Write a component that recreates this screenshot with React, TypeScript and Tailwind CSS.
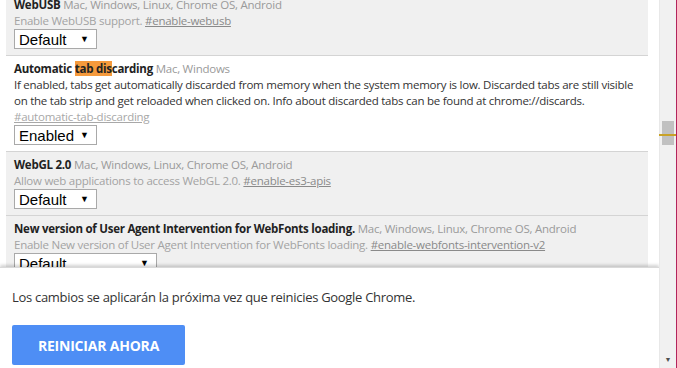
import React from 'react';

/* chrome://flags 風の画面 */

type Flag = {
  title: React.ReactNode;
  platforms: string;
  desc: React.ReactNode;
  value: string;
  selectW: string;
  active?: boolean;
};

const flags: Flag[] = [
  {
    title: 'WebUSB',
    platforms: 'Mac, Windows, Linux, Chrome OS, Android',
    desc: (
      <>
        Enable WebUSB support. <span className="underline text-[#8a8a8a]">#enable-webusb</span>
      </>
    ),
    value: 'Default',
    selectW: 'w-[83px]',
  },
  {
    title: (
      <>
        Automatic <span className="bg-[#f59a3c]">tab dis</span>carding
      </>
    ),
    platforms: 'Mac, Windows',
    desc: (
      <>
        <span className="text-[#333]">
          If enabled, tabs get automatically discarded from memory when the system memory is low. Discarded tabs are still visible
          <br />
          on the tab strip and get reloaded when clicked on. Info about discarded tabs can be found at chrome://discards.
        </span>
        <br />
        <span className="underline text-[#a8a8a8]">#automatic-tab-discarding</span>
      </>
    ),
    value: 'Enabled',
    selectW: 'w-[83px]',
    active: true,
  },
  {
    title: 'WebGL 2.0',
    platforms: 'Mac, Windows, Linux, Chrome OS, Android',
    desc: (
      <>
        Allow web applications to access WebGL 2.0. <span className="underline text-[#8a8a8a]">#enable-es3-apis</span>
      </>
    ),
    value: 'Default',
    selectW: 'w-[83px]',
  },
  {
    title: 'New version of User Agent Intervention for WebFonts loading.',
    platforms: 'Mac, Windows, Linux, Chrome OS, Android',
    desc: (
      <>
        Enable New version of User Agent Intervention for WebFonts loading.{' '}
        <span className="underline text-[#8a8a8a]">#enable-webfonts-intervention-v2</span>
      </>
    ),
    value: 'Default',
    selectW: 'w-[143px]',
  },
];

const FakeSelect = ({ value, w }: { value: string; w: string }) => (
  <div
    className={`${w} h-[20px] flex items-center justify-between pl-[4px] pr-[7px] bg-white border border-[#a9a9a9] text-[15px] leading-none text-black tracking-normal`}
    style={{ fontFamily: '"Liberation Sans", Arial, sans-serif' }}
  >
    <span>{value}</span>
    <span className="text-[9px]">▼</span>
  </div>
);

const FlagRow = ({ flag }: { flag: Flag }) => (
  <div
    className={`px-[8px] pt-[5px] pb-[6px] border-b border-[#d4d4d4] ${flag.active ? 'bg-white' : 'bg-[#f0f0f0]'}`}
  >
    <div className="text-[11.5px] leading-[16px] whitespace-nowrap">
      <span className="font-bold text-[#222]">{flag.title}</span>{' '}
      <span className="text-[#9a9a9a]">{flag.platforms}</span>
    </div>
    <div className="text-[11.5px] leading-[16px] text-[#a3a3a3] whitespace-nowrap">{flag.desc}</div>
    <FakeSelect value={flag.value} w={flag.selectW} />
  </div>
);

export default function App() {
  return (
    <div
      className="w-[677px] h-[368px] overflow-hidden flex bg-white"
      style={{ fontFamily: '"Open Sans", "Noto Sans", sans-serif' }}
    >
      {/* メイン領域 */}
      <div className="w-[659px] flex flex-col">
        <div className="h-[267px] overflow-hidden">
          <div className="mt-[-8px] ml-[6px] w-[642px] tracking-[-0.25px]">
            {flags.map((f, i) => (
              <FlagRow key={i} flag={f} />
            ))}
          </div>
        </div>
        <div className="flex-1 bg-white shadow-[0_-2px_3px_rgba(0,0,0,0.18)] border-t border-[#d9d9d9] px-[12px] pt-[20px]">
          <p className="text-[13px] leading-[18px] text-[#333] tracking-[-0.3px]">
            Los cambios se aplicarán la próxima vez que reinicies Google Chrome.
          </p>
          <button className="mt-[19px] w-[173px] h-[40px] rounded-[2px] bg-[#4e8ef5] text-white font-bold text-[14px] tracking-[-0.2px]">
            REINICIAR AHORA
          </button>
        </div>
      </div>

      {/* スクロールバー */}
      <div className="w-[17px] flex flex-col bg-[#f1f1f1] border-l border-[#e8e8e8] relative">
        <div className="h-[121px]" />
        <div className="mx-[2px] h-[24px] bg-[#c1c1c1]" />
        <div className="flex-1" />
        <div className="h-[16px] flex items-center justify-center text-[7px] text-[#505050]">▼</div>
        <div className="absolute left-[-1px] right-0 top-[134px] h-[2px] bg-[#c9a227]" />
      </div>
      <div className="w-[1px] bg-[#b3245c]" />
    </div>
  );
}
